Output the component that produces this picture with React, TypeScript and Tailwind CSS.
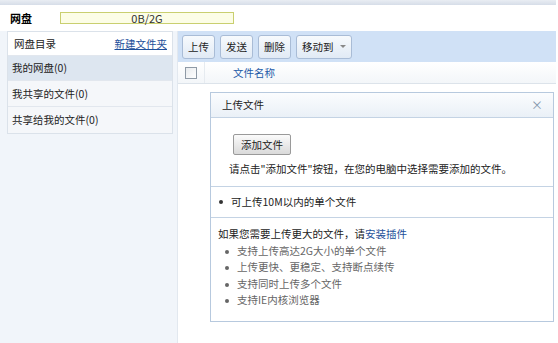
const items = ["我共享的文件(0)", "共享给我的文件(0)"];
const plugins = [
  "支持上传高达2G大小的单个文件",
  "上传更快、更稳定、支持断点续传",
  "支持同时上传多个文件",
  "支持IE内核浏览器",
];

function Dot({ gray }: { gray?: boolean }) {
  return <span className={`inline-block w-[4px] h-[4px] rounded-full ${gray ? "bg-[#666]" : "bg-[#333]"} mr-[8px] align-middle`} />;
}

function ToolButton({ label, arrow }: { label: string; arrow?: boolean }) {
  return (
    <button className="h-[24px] px-[5px] flex items-center gap-[6px] rounded-[3px] border border-[#a9bcd6] bg-gradient-to-b from-[#f7fafd] to-[#e1eaf5] text-[10.5px] text-[#222]">
      {label}
      {arrow && (
        <span className="w-0 h-0 border-l-[3px] border-r-[3px] border-t-[3px] border-l-transparent border-r-transparent border-t-[#888]" />
      )}
    </button>
  );
}

export default function App() {
  return (
    <div
      className="w-[558px] h-[343px] bg-white flex flex-col overflow-hidden text-[10.5px] text-[#222]"
      style={{ fontFamily: "'Noto Sans CJK SC', 'Liberation Sans', sans-serif" }}
    >
      <div className="h-[5px] w-[556px] bg-gradient-to-b from-[#e9edf3] to-[#d6dde8]" />

      <div className="h-[26px] flex items-center">
        <span className="ml-[10px] w-[50px] font-bold text-[11px] text-black">网盘</span>
        <div className="w-[174px] h-[12px] border border-[#c9cf6f] bg-[#fcfde6] flex items-center justify-center text-[11px] leading-none text-[#333]">
          0B/2G
        </div>
      </div>

      <div className="flex-1 flex">
        <div className="w-[178px] bg-[#f1f5fa] border-r border-[#e2e8ef] pl-[7px] pr-[4px]">
          <div className="border border-[#dbe2ea] bg-[#f5f7fa]">
            <div className="h-[24px] flex items-center justify-between pl-[6px] pr-[5px] border-b border-[#e2e7ee] bg-white">
              <span className="text-[#222]">网盘目录</span>
              <span className="text-[#1d4f9a] underline">新建文件夹</span>
            </div>
            <div className="h-[25px] flex items-center px-[4px] bg-[#dde6f0] border-b border-[#e2e7ee]">
              我的网盘(0)
            </div>
            {items.map((t) => (
              <div key={t} className="h-[26px] flex items-center px-[4px] border-b border-[#e2e7ee] last:border-b-0 bg-[#f5f7fa]">
                {t}
              </div>
            ))}
          </div>
        </div>

        <div className="w-[378px] flex flex-col">
          <div className="h-[31px] bg-[#d0e1f6] flex items-center gap-[5px] px-[4px]">
            <ToolButton label="上传" />
            <ToolButton label="发送" />
            <ToolButton label="删除" />
            <ToolButton label="移动到" arrow />
          </div>
          <div className="h-[22px] flex items-center bg-gradient-to-b from-white to-[#f3f6f9] border-b border-[#dce3ea]">
            <div className="w-[27px] h-full flex items-center justify-center border-r border-[#e6ebf0]">
              <div className="w-[12px] h-[12px] border border-[#8f9aa6] bg-gradient-to-br from-[#e8ebee] to-white" />
            </div>
            <span className="ml-[28px] text-[#1d5aa8]">文件名称</span>
          </div>

          <div className="mt-[8px] ml-[32px] w-[344px] border border-[#b7c9de] flex flex-col">
            <div className="h-[25px] flex items-center justify-between pl-[11px] pr-[10px] bg-gradient-to-b from-[#fbfcfe] to-[#eaf0f7] border-b border-[#c4d3e4]">
              <span>上传文件</span>
              <span className="text-[#8496ad] text-[12px]">×</span>
            </div>
            <div className="pt-[16px] pl-[18px] pb-[8px]">
              <button className="h-[21px] px-[7px] rounded-[2px] border border-[#9a9a9a] bg-gradient-to-b from-[#fbfbfb] to-[#dadada] text-[10.5px] ml-[4px]">
                添加文件
              </button>
              <div className="mt-[5px] leading-[18px]">请点击"添加文件"按钮，在您的电脑中选择需要添加的文件。</div>
            </div>
            <div className="border-t border-[#c4d3e4] h-[31px] flex items-center px-[8px]">
              <Dot />可上传10M以内的单个文件
            </div>
            <div className="border-t border-[#c4d3e4] pt-[8px] pb-[12px] px-[7px] leading-[16.5px]">
              <div>
                如果您需要上传更大的文件，请<span className="text-[#1d4f9a]">安装插件</span>
              </div>
              {plugins.map((p) => (
                <div key={p} className="text-[#666] pl-[7px]">
                  <Dot gray />
                  {p}
                </div>
              ))}
            </div>
          </div>
        </div>
      </div>
    </div>
  );
}
